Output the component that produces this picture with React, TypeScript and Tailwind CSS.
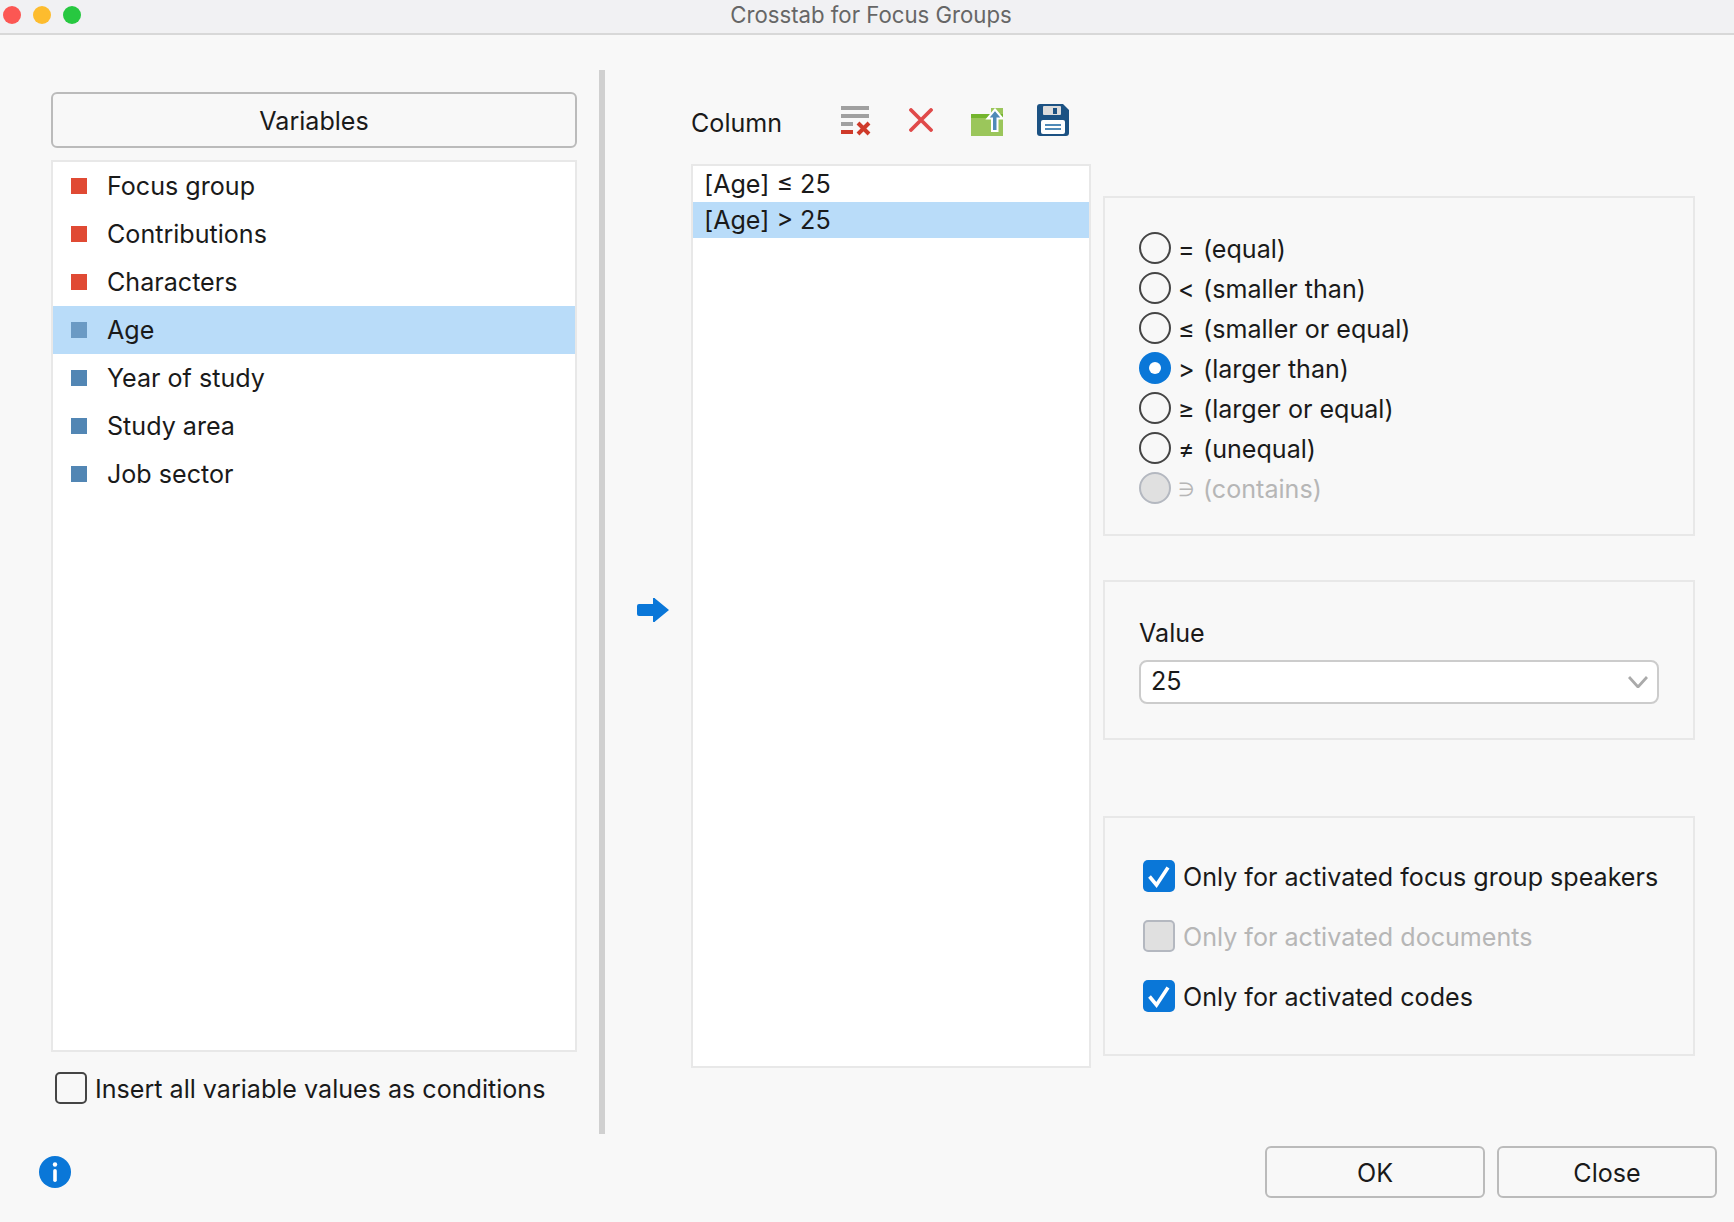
const variables = [
  { name: 'Focus group', color: 'bg-[#e04a34]' },
  { name: 'Contributions', color: 'bg-[#e04a34]' },
  { name: 'Characters', color: 'bg-[#e04a34]' },
  { name: 'Age', color: 'bg-[#6b9ac4]', selected: true },
  { name: 'Year of study', color: 'bg-[#5286b4]' },
  { name: 'Study area', color: 'bg-[#5286b4]' },
  { name: 'Job sector', color: 'bg-[#5286b4]' },
];

const operators = [
  { symbol: '=', label: '(equal)' },
  { symbol: '<', label: '(smaller than)' },
  { symbol: '≤', label: '(smaller or equal)' },
  { symbol: '>', label: '(larger than)', checked: true },
  { symbol: '≥', label: '(larger or equal)' },
  { symbol: '≠', label: '(unequal)' },
  { symbol: '∋', label: '(contains)', disabled: true },
];

const options = [
  { label: 'Only for activated focus group speakers', checked: true },
  { label: 'Only for activated documents', disabled: true },
  { label: 'Only for activated codes', checked: true },
];

function Radio({
  symbol,
  label,
  checked,
  disabled,
}: {
  symbol: string;
  label: string;
  checked?: boolean;
  disabled?: boolean;
}) {
  return (
    <div className="flex h-[40px] items-center gap-[7px]">
      {checked ? (
        <span className="flex h-[32px] w-[32px] items-center justify-center rounded-full bg-[#0a77d8]">
          <span className="h-[12px] w-[12px] rounded-full bg-white" />
        </span>
      ) : (
        <span
          className={
            disabled
              ? 'h-[32px] w-[32px] rounded-full border-2 border-[#b4b8c0] bg-[#e0e0e0]'
              : 'h-[32px] w-[32px] rounded-full border-2 border-[#454545]'
          }
        />
      )}
      <span className={`flex pt-[4px] ${disabled ? 'text-[#b6b6b6]' : ''}`}>
        <span className={`w-[25px] ${disabled ? 'text-[19px] leading-[25px]' : ''}`}>{symbol}</span>
        <span>{label}</span>
      </span>
    </div>
  );
}

function Checkbox({ checked, disabled }: { checked?: boolean; disabled?: boolean }) {
  if (checked) {
    return (
      <span className="flex h-[32px] w-[32px] items-center justify-center rounded-[5px] bg-[#0a77d8]">
        <svg width="32" height="32" viewBox="0 0 32 32" fill="none">
          <path d="M6.5 16.5 L13.5 25 L25 7.5" stroke="white" strokeWidth="3.6" />
        </svg>
      </span>
    );
  }
  return (
    <span
      className={
        disabled
          ? 'h-[32px] w-[32px] rounded-[5px] border-2 border-[#b4b8c0] bg-[#e0e0e0]'
          : 'h-[32px] w-[32px] rounded-[5px] border-2 border-[#454545]'
      }
    />
  );
}

function ClearAllIcon() {
  return (
    <svg width="30" height="30" viewBox="0 0 30 30">
      <rect x="0" y="0" width="28" height="4" fill="#a0a0a0" />
      <rect x="0" y="8" width="28" height="4" fill="#a0a0a0" />
      <rect x="0" y="16" width="12" height="4" fill="#a0a0a0" />
      <rect x="0" y="24" width="12" height="4" fill="#cf3a2a" />
      <path d="M17 17 L28 28 M28 17 L17 28" stroke="#cf3a2a" strokeWidth="4" />
    </svg>
  );
}

function DeleteIcon() {
  return (
    <svg width="24" height="24" viewBox="0 0 24 24">
      <path d="M2 2 L22 22 M22 2 L2 22" stroke="#e04a4a" strokeWidth="3.8" strokeLinecap="round" />
    </svg>
  );
}

function ExportIcon() {
  return (
    <svg width="32" height="28" viewBox="0 0 32 28">
      <rect x="20" y="0" width="12" height="8" fill="#9bc65b" />
      <rect x="0" y="6" width="32" height="4" fill="#74b52d" />
      <rect x="0" y="10" width="32" height="18" fill="#9bc65b" />
      <path
        d="M24 1.5 L31.5 10.5 L26.5 10.5 L26.5 23 L21 23 L21 10.5 L16.5 10.5 Z"
        fill="#4f8ab8"
        stroke="white"
        strokeWidth="2"
      />
    </svg>
  );
}

function SaveIcon() {
  return (
    <svg width="32" height="32" viewBox="0 0 32 32">
      <path
        d="M3 0 H26 L32 6 V29 A3 3 0 0 1 29 32 H3 A3 3 0 0 1 0 29 V3 A3 3 0 0 1 3 0 Z"
        fill="#1c5283"
      />
      <rect x="6" y="2" width="18" height="9" rx="1" fill="#dcdcdc" />
      <rect x="16" y="4" width="4" height="6" fill="#1c5283" />
      <rect x="4" y="16" width="24" height="14" rx="2" fill="white" />
      <rect x="8" y="20" width="16" height="2" fill="#4f8ab8" />
      <rect x="8" y="24" width="16" height="2" fill="#4f8ab8" />
    </svg>
  );
}

export default function App() {
  return (
    <div className="flex h-[1222px] w-[1734px] flex-col overflow-hidden bg-[#f8f8f8] font-[Inter,sans-serif] text-[25.1px] leading-none text-[#1a1a1a]">
      {/* Title bar */}
      <div className="flex h-[35px] shrink-0 items-center border-b-2 border-[#d8d8d8] bg-[#f1f1f3]">
        <div className="mb-[3px] flex w-[81px] gap-[12px] pl-[3px]">
          <span className="h-[18px] w-[18px] rounded-full bg-[#fc5753]" />
          <span className="h-[18px] w-[18px] rounded-full bg-[#fdbc2e]" />
          <span className="h-[18px] w-[18px] rounded-full bg-[#27c840]" />
        </div>
        <div className="flex-1 pb-[2px] text-center text-[22.2px] text-[#666666]">Crosstab for Focus Groups</div>
        <div className="w-[73px]" />
      </div>

      {/* Main */}
      <div className="flex h-[1111px] shrink-0 pl-[51px]">
        <div className="flex w-[526px] flex-col pt-[57px]">
          <div className="flex h-[56px] items-center justify-center rounded-[6px] border-2 border-[#bbbbbb] pt-[3px]">
            Variables
          </div>
          <div className="mt-[12px] h-[892px] border-2 border-[#e8e8e8] bg-white">
            {variables.map((v) => (
              <div
                key={v.name}
                className={`flex h-[48px] items-center pl-[18px] ${v.selected ? 'bg-[#b9dcf9]' : ''}`}
              >
                <span className={`h-[16px] w-[16px] ${v.color}`} />
                <span className="ml-[20px] pt-[2px]">{v.name}</span>
              </div>
            ))}
          </div>
          <div className="mt-[20px] flex items-center gap-[8px] pl-[4px]">
            <Checkbox />
            <span className="pt-[4px]">Insert all variable values as conditions</span>
          </div>
        </div>

        <div className="ml-[22px] mt-[35px] h-[1064px] w-[6px] bg-[#d0d0d0]" />

        <div className="flex w-[86px] items-center pl-[32px]">
          <svg className="mt-[39px]" width="32" height="24" viewBox="0 0 32 24">
            <path
              d="M2 6 H16 V1 A1 1 0 0 1 18 0.5 L32 12 L18 23.5 A1 1 0 0 1 16 23 V18 H2 A2 2 0 0 1 0 16 V8 A2 2 0 0 1 2 6 Z"
              fill="#0a77d8"
            />
          </svg>
        </div>

        {/* Column list */}
        <div className="flex w-[400px] flex-col">
          <div className="flex h-[129px] items-start pt-[69px]">
            <span className="w-[150px] pt-[7px]">Column</span>
            <div className="mt-[2px]">
              <ClearAllIcon />
            </div>
            <div className="ml-[38px] mt-[4px]">
              <DeleteIcon />
            </div>
            <div className="ml-[38px] mt-[4px]">
              <ExportIcon />
            </div>
            <div className="ml-[34px]">
              <SaveIcon />
            </div>
          </div>
          <div className="h-[904px] border-2 border-[#e8e8e8] bg-white">
            <div className="flex h-[36px] items-center pl-[11px] pt-[2px]">[Age] ≤ 25</div>
            <div className="flex h-[36px] items-center bg-[#b9dcf9] pl-[11px] pt-[2px]">[Age] &gt; 25</div>
          </div>
        </div>

        {/* Right column */}
        <div className="ml-[12px] flex w-[592px] flex-col pt-[161px]">
          <div className="h-[340px] border-2 border-[#e8e8e8] pl-[34px] pt-[30px]">
            {operators.map((op) => (
              <Radio key={op.label} {...op} />
            ))}
          </div>
          <div className="mt-[44px] h-[160px] border-2 border-[#e8e8e8] pl-[34px] pt-[39px]">
            <div>Value</div>
            <div className="mt-[14px] flex h-[44px] w-[520px] items-center justify-between rounded-[8px] border-2 border-[#cccccc] bg-white pl-[10px] pr-[9px]">
              <span className="pb-[1px]">25</span>
              <svg width="20" height="12" viewBox="0 0 20 12" fill="none">
                <path d="M1 1 L10 11 L19 1" stroke="#aaaaaa" strokeWidth="2.8" />
              </svg>
            </div>
          </div>
          <div className="mt-[76px] h-[240px] border-2 border-[#e8e8e8] pl-[38px] pt-[28px]">
            {options.map((o) => (
              <div key={o.label} className="flex h-[60px] items-center gap-[8px]">
                <Checkbox checked={o.checked} disabled={o.disabled} />
                <span className={`pt-[4px] ${o.disabled ? 'text-[#b6b6b6]' : ''}`}>{o.label}</span>
              </div>
            ))}
          </div>
        </div>
      </div>

      {/* Footer */}
      <div className="flex items-center justify-between pl-[39px] pr-[17px]">
        <svg width="32" height="32" viewBox="0 0 32 32">
          <circle cx="16" cy="16" r="16" fill="#0a77d8" />
          <circle cx="16" cy="8.5" r="2.2" fill="white" />
          <rect x="14.2" y="13" width="3.6" height="13" rx="1.8" fill="white" />
        </svg>
        <div className="flex gap-[12px]">
          <div className="flex h-[52px] w-[220px] items-center justify-center rounded-[6px] border-2 border-[#bbbbbb] pt-[4px]">
            OK
          </div>
          <div className="flex h-[52px] w-[220px] items-center justify-center rounded-[6px] border-2 border-[#bbbbbb] pt-[4px]">
            Close
          </div>
        </div>
      </div>
    </div>
  );
}
